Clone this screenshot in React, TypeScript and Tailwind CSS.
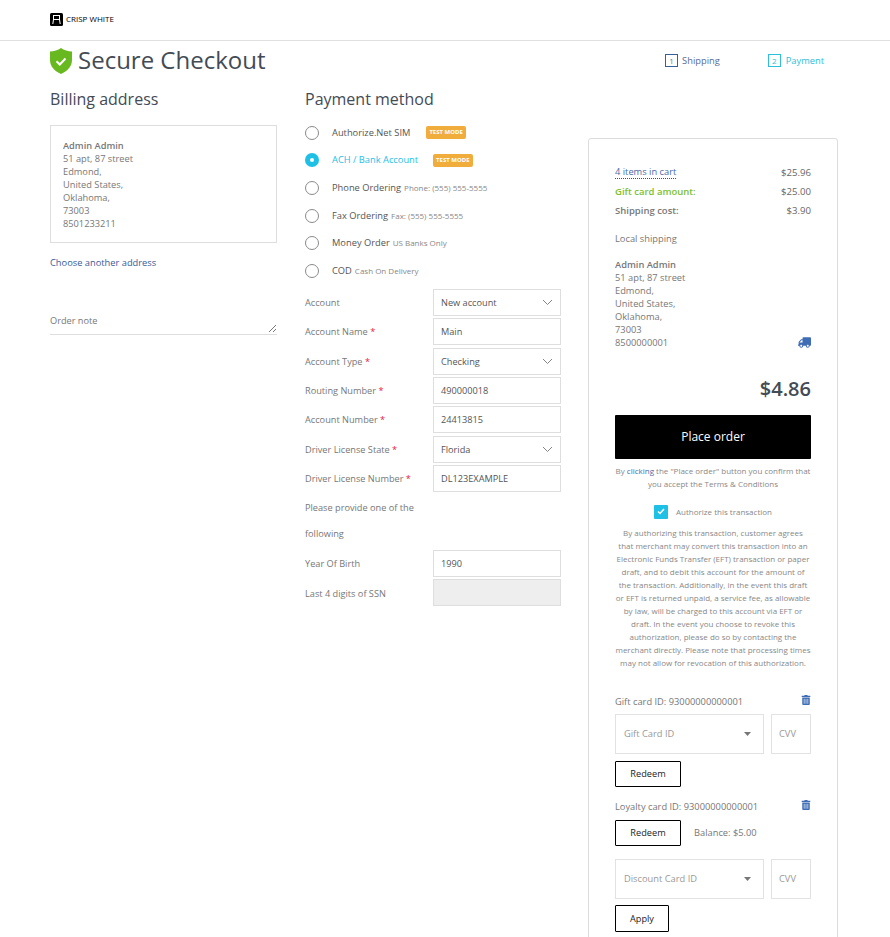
import React from "react";
import { FaTruck, FaTrashAlt } from "react-icons/fa";

const Chevron = () => (
  <svg width="11" height="7" viewBox="0 0 11 7" className="absolute right-[7px] top-[9px]" fill="none" stroke="#777" strokeWidth="0.9">
    <path d="M1 1l4.5 4.5L10 1" />
  </svg>
);

const Caret = () => (
  <svg width="7" height="4" viewBox="0 0 7 4" className="absolute right-[12px] top-[17px]" fill="#777">
    <path d="M0 0h7L3.500 4z" />
  </svg>
);

function Radio({ checked, label, sub, badge, badgeGap }: { checked?: boolean; label: string; sub?: string; badge?: boolean; badgeGap?: string }) {
  return (
    <div className="flex items-center h-[27.6px]">
      {checked ? (
        <span className="w-[14px] h-[14px] rounded-full bg-[#1fc0e6] flex items-center justify-center shrink-0">
          <span className="w-[4px] h-[4px] rounded-full bg-white" />
        </span>
      ) : (
        <span className="w-[14px] h-[14px] rounded-full border border-[#8a8a8a] shrink-0" />
      )}
      <span className={`ml-[13px] text-[9.3px] ${checked ? "text-[#1fc0e6]" : "text-[#555]"}`}>{label}</span>
      {sub && <span className="ml-[3px] text-[8px] text-[#888]">{sub}</span>}
      {badge && (
        <span className={`${badgeGap} h-[13px] px-[3px] rounded-[2px] bg-[#f0ad3c] text-white text-[6px] font-bold flex items-center`}>TEST MODE</span>
      )}
    </div>
  );
}

function Row({ label, req, value, select, disabled }: { label: string; req?: boolean; value?: string; select?: boolean; disabled?: boolean }) {
  return (
    <div className="flex items-center h-[27px] mb-[2.33px]">
      <div className="w-[128px] pt-[1px] text-[9.2px] text-[#777]">
        {label}
        {req && <span className="text-[#e8173f]"> *</span>}
      </div>
      <div className={`relative w-[128px] h-[27px] border border-[#dedede] pl-[7px] pt-[1px] flex items-center text-[9.2px] text-[#555] ${disabled ? "bg-[#eeeeee]" : "bg-white"}`}>
        {value}
        {select && <Chevron />}
      </div>
    </div>
  );
}

function CardSelect({ label }: { label: string }) {
  return (
    <div className="flex gap-[7px]">
      <div className="relative w-[149px] h-[40px] border border-[#e2e2e2] pl-[8px] flex items-center text-[9.3px] text-[#999]">
        {label}
        <Caret />
      </div>
      <div className="w-[40px] h-[40px] border border-[#e2e2e2] pl-[7px] flex items-center text-[9.3px] text-[#999]">CVV</div>
    </div>
  );
}

const OutlineBtn = ({ w, h, children }: { w: string; h: string; children: React.ReactNode }) => (
  <div className={`${w} ${h} border border-black rounded-[1px] flex items-center justify-center text-[9.2px] text-[#222]`}>{children}</div>
);

export default function App() {
  return (
    <div className="h-[937px] w-[890px] overflow-hidden bg-white font-['Open_Sans',sans-serif]">
      <header className="h-[41px] border-b border-[#e0e0e0] pl-[50px] flex items-center">
        <div className="flex items-center mt-[-2px]">
          <svg width="13" height="13" viewBox="0 0 13 13">
            <rect width="13" height="13" rx="1.5" fill="#000" />
            <path d="M3 2.500h7M3.500 2.500v4M9.500 2.500v4M3 6.500h7M3.500 6.500L2.800 11M9.500 6.500l.7 4.500" stroke="#fff" strokeWidth="1" fill="none" />
          </svg>
          <span className="ml-[3px] text-[8px] font-medium text-black">CRISP WHITE</span>
        </div>
      </header>

      <div className="pl-[50px] pr-[52px]">
        <div className="flex items-center justify-between h-[39px]">
          <div className="flex items-center">
            <svg width="22" height="26" viewBox="0 0 22 26">
              <path d="M11 0C14 2.200 18 3.400 22 3.600V12c0 6.500-4.500 11-11 14C4.500 23 0 18.500 0 12V3.600C4 3.400 8 2.200 11 0z" fill="#68b81f" />
              <path d="M6.500 13.300l3.300 3.200 5.700-6" stroke="#fff" strokeWidth="2" fill="none" />
            </svg>
            <h1 className="ml-[6px] mt-[-2px] text-[24px] leading-none text-[#444b55]">Secure Checkout</h1>
          </div>
          <div className="flex items-center text-[9.3px] mr-[14px]">
            <span className="w-[13px] h-[13px] border border-[#3c5f93] text-[#777] text-[8px] flex items-center justify-center">1</span>
            <span className="ml-[4px] text-[#5a6a96]">Shipping</span>
            <span className="ml-[48px] w-[13px] h-[13px] border border-[#2cc0dc] text-[#2cc0dc] text-[8px] flex items-center justify-center">2</span>
            <span className="ml-[5px] text-[#2cc0dc]">Payment</span>
          </div>
        </div>

        <div className="flex items-start">
          <div className="w-[227px] shrink-0">
            <h2 className="mt-[8px] h-[22px] text-[16px] leading-[22px] text-[#444b55]">Billing address</h2>
            <div className="mt-[15px] h-[118px] border border-[#dedede] pl-[12px] pt-[13px] text-[9.25px] leading-[13px] text-[#777]">
              <div className="font-semibold">Admin Admin</div>
              <div>51 apt, 87 street</div>
              <div>Edmond,</div>
              <div>United States,</div>
              <div>Oklahoma,</div>
              <div>73003</div>
              <div>8501233211</div>
            </div>
            <div className="mt-[13px] text-[9.3px] leading-[13px] text-[#3a5a98]">Choose another address</div>
            <div className="relative mt-[45px] h-[21px] border-b border-[#dedede] text-[9.2px] leading-[13px] text-[#777]">
              Order note
              <svg width="9" height="9" viewBox="0 0 9 9" className="absolute right-0 bottom-[1px]" stroke="#555" strokeWidth="0.800">
                <path d="M1 8l7-7M5 8l3-3" />
              </svg>
            </div>
          </div>

          <div className="ml-[28px] w-[256px] shrink-0">
            <h2 className="mt-[8px] h-[22px] text-[16px] leading-[22px] text-[#444b55]">Payment method</h2>
            <div className="mt-[9px] mb-[4.3px]">
              <Radio label="Authorize.Net SIM" badge badgeGap="ml-[16px]" />
              <Radio checked label="ACH / Bank Account" badge badgeGap="ml-[15px]" />
              <Radio label="Phone Ordering" sub="Phone: (555) 555-5555" />
              <Radio label="Fax Ordering" sub="Fax: (555) 555-5555" />
              <Radio label="Money Order" sub="US Banks Only" />
              <Radio label="COD" sub="Cash On Delivery" />
            </div>
            <Row label="Account" value="New account" select />
            <Row label="Account Name" req value="Main" />
            <Row label="Account Type" req value="Checking" select />
            <Row label="Routing Number" req value="490000018" />
            <Row label="Account Number" req value="24413815" />
            <Row label="Driver License State" req value="Florida" select />
            <Row label="Driver License Number" req value="DL123EXAMPLE" />
            <div className="w-[128px] pt-[1px] text-[9.2px] leading-[26px] text-[#777] mb-[3px]">Please provide one of the following</div>
            <Row label="Year Of Birth" value="1990" />
            <Row label="Last 4 digits of SSN" disabled />
          </div>

          <aside className="ml-[27px] mt-[58px] w-[250px] h-[900px] shrink-0 border border-[#dcdcdc] rounded-[3px] px-[26px] pt-[27px] text-[9.3px] text-[#777]">
            <div className="flex justify-between leading-[13px]">
              <span className="text-[#4a6aa8] border-b border-dotted border-[#2f4f9f] leading-[12px]">4 items in cart</span>
              <span className="font-medium text-[9.6px] text-[#666]">$25.96</span>
            </div>
            <div className="mt-[6px] flex justify-between leading-[13px]">
              <span className="font-semibold text-[#7cc02e] text-[9.5px]">Gift card amount:</span>
              <span className="font-medium text-[9.6px] text-[#666]">$25.00</span>
            </div>
            <div className="mt-[6px] flex justify-between leading-[13px]">
              <span className="font-semibold text-[9.5px]">Shipping cost:</span>
              <span className="font-medium text-[9.6px] text-[#666]">$3.90</span>
            </div>
            <div className="mt-[15px] leading-[13px]">Local shipping</div>
            <div className="mt-[13px] leading-[13px]">
              <div className="font-semibold">Admin Admin</div>
              <div>51 apt, 87 street</div>
              <div>Edmond,</div>
              <div>United States,</div>
              <div>Oklahoma,</div>
              <div>73003</div>
              <div className="flex justify-between items-center">
                <span>8500000001</span>
                <FaTruck className="text-[#3e6db5] text-[13px] -scale-x-100" />
              </div>
            </div>
            <div className="mt-[26px] text-right text-[20px] leading-[27px] font-semibold text-[#444b55]">$4.86</div>
            <div className="mt-[13px] h-[44px] bg-black rounded-[1px] flex items-center justify-center text-[12px] text-white">Place order</div>
            <p className="mt-[5px] text-center text-[8px] leading-[13px] text-[#888]">
              By <span className="text-[#4a6aa8]">clicking</span> the "Place order" button you confirm that you accept the Terms &amp; Conditions
            </p>
            <div className="mt-[14px] flex items-center justify-center h-[15px]">
              <span className="w-[14px] h-[14px] rounded-[1px] bg-[#1fc0e6] flex items-center justify-center">
                <svg width="8" height="7" viewBox="0 0 8 7" fill="none" stroke="#fff" strokeWidth="1.500"><path d="M1 3.500l2 2L7 1" /></svg>
              </span>
              <span className="ml-[8px] text-[8px] text-[#888]">Authorize this transaction</span>
            </div>
            <p className="mt-[7px] text-center text-[8px] leading-[13px] text-[#888]">
              By authorizing this transaction, customer agrees that merchant may convert this transaction into an Electronic Funds Transfer (EFT) transaction or paper draft, and to debit this account for the amount of the transaction. Additionally, in the event this draft or EFT is returned unpaid, a service fee, as allowable by law, will be charged to this account via EFT or draft. In the event you choose to revoke this authorization, please do so by contacting the merchant directly. Please note that processing times may not allow for revocation of this authorization.
            </p>
            <div className="mt-[26px] flex justify-between items-center h-[13px]">
              <span>Gift card ID: 93000000000001</span>
              <FaTrashAlt className="text-[#3e6db5] text-[10px] mt-[-3px]" />
            </div>
            <div className="mt-[6px]"><CardSelect label="Gift Card ID" /></div>
            <div className="mt-[7px]"><OutlineBtn w="w-[66px]" h="h-[26px]">Redeem</OutlineBtn></div>
            <div className="mt-[13px] flex justify-between items-center h-[13px]">
              <span>Loyalty card ID: 93000000000001</span>
              <FaTrashAlt className="text-[#3e6db5] text-[10px] mt-[-3px]" />
            </div>
            <div className="mt-[7px] flex items-center">
              <OutlineBtn w="w-[66px]" h="h-[26px]">Redeem</OutlineBtn>
              <span className="ml-[13px]">Balance: $5.00</span>
            </div>
            <div className="mt-[13px]"><CardSelect label="Discount Card ID" /></div>
            <div className="mt-[6px]"><OutlineBtn w="w-[54px]" h="h-[27px]">Apply</OutlineBtn></div>
          </aside>
        </div>
      </div>
    </div>
  );
}
